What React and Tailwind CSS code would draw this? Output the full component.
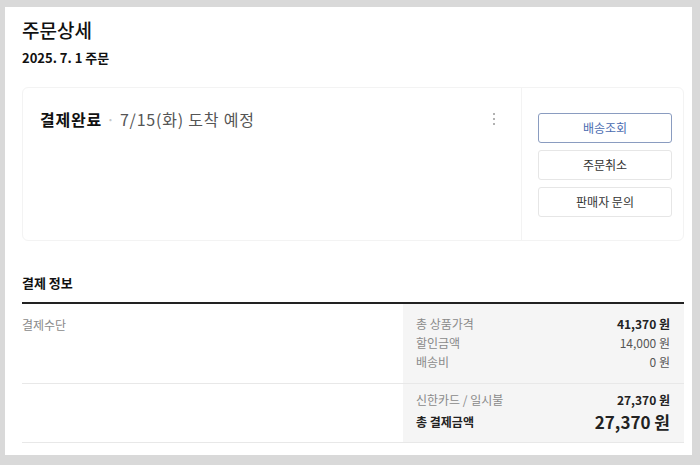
const font = { fontFamily: '"Noto Sans CJK KR", "Noto Sans", sans-serif' };

function ActionButton({ children, primary }) {
  return (
    <button
      className={`h-[30px] w-full rounded-[3px] border bg-white text-[12px] ${
        primary ? 'border-[#8a9cc0] text-[#4a6bb0]' : 'border-[#e6e6e6] text-[#333]'
      }`}
    >
      {children}
    </button>
  );
}

function PriceLine({ label, value, labelClass = 'text-[#8a8a8a]', valueClass = 'text-[#555]', lh = 'leading-[19px]' }) {
  return (
    <div className={`flex items-center justify-between ${lh}`}>
      <span className={`text-[12px] ${labelClass}`}>{label}</span>
      <span className={valueClass}>{value}</span>
    </div>
  );
}

export default function App() {
  return (
    <div className="min-h-[465px] bg-[#d9d9d9] pl-[5px] pt-[7px]" style={font}>
      <div className="h-[448px] w-[687px] bg-white pl-[17px] pr-[8px]">
        <h1 className="pt-[10px] text-[19px] font-medium leading-[26px] text-[#111]">주문상세</h1>
        <p className="mt-[6px] text-[13px] font-bold leading-[18px] text-[#111]">2025. 7. 1 주문</p>

        <div className="mt-[20px] flex h-[154px] rounded-[6px] border border-[#f3f3f3]">
          <div className="relative flex-1 pl-[17px] pt-[19px]">
            <p className="text-[16px] leading-[24px] tracking-[0.8px]">
              <span className="font-bold text-[#111]">결제완료</span>
              <span className="mx-[4px] text-[#c8c8c8]">·</span>
              <span className="text-[#555]">7/15(화) 도착 예정</span>
            </p>
            <div className="absolute right-[26px] top-[25px] flex flex-col gap-[3px]">
              <span className="h-[2px] w-[2px] rounded-full bg-[#999]" />
              <span className="h-[2px] w-[2px] rounded-full bg-[#999]" />
              <span className="h-[2px] w-[2px] rounded-full bg-[#999]" />
            </div>
          </div>
          <div className="flex w-[162px] flex-col gap-[7px] border-l border-[#f3f3f3] pl-[16px] pr-[11px] pt-[25px]">
            <ActionButton primary>배송조회</ActionButton>
            <ActionButton>주문취소</ActionButton>
            <ActionButton>판매자 문의</ActionButton>
          </div>
        </div>

        <h2 className="mt-[32px] border-b-2 border-[#222] pb-[9px] text-[13px] font-bold leading-[20px] text-[#111]">
          결제 정보
        </h2>

        <div className="flex border-b border-[#e8e8e8]">
          <div className="flex-1 pt-[11px] text-[12px] leading-[19px] text-[#8a8a8a]">결제수단</div>
          <div className="w-[281px] bg-[#f5f5f5] pb-[12px] pl-[13px] pr-[14px] pt-[10px] text-[12px]">
            <PriceLine label="총 상품가격" value="41,370 원" valueClass="font-bold text-[#222]" />
            <PriceLine label="할인금액" value="14,000 원" />
            <PriceLine label="배송비" value="0 원" />
          </div>
        </div>

        <div className="flex border-b border-[#e8e8e8]">
          <div className="flex-1" />
          <div className="w-[281px] bg-[#f5f5f5] pb-[7px] pl-[13px] pr-[14px] pt-[6px] text-[12px]">
            <PriceLine label="신한카드 / 일시불" value="27,370 원" valueClass="font-bold text-[#222]" />
            <div className="flex items-center justify-between leading-[26px]">
              <span className="text-[12px] font-bold text-[#222]">총 결제금액</span>
              <span className="text-[17px] font-semibold text-[#222]">27,370 원</span>
            </div>
          </div>
        </div>
      </div>
    </div>
  );
}
